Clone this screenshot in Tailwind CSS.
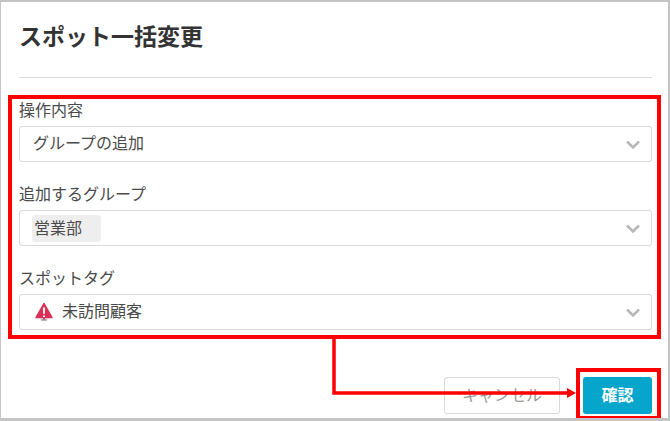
<!DOCTYPE html>
<html lang="ja">

<head>
    <meta charset="UTF-8">
    <meta name="viewport" content="width=device-width, initial-scale=1.0">
    <title>スポット一括変更</title>
    <script src="https://cdn.jsdelivr.net/npm/@tailwindcss/browser@4"></script>
</head>

<body class="bg-white">

    <div class="relative w-[670px] h-[421px] overflow-hidden bg-white border-t-2 border-l border-r-2 border-b-[3px] border-[#c4c4c4] font-['Roboto','Noto_Sans_CJK_JP',sans-serif] text-[#4a4a4a]">
        <div class="px-[18px] pr-[16px]">
            <h2 class="h-[75px] pt-[19px] text-[23px] leading-[34px] font-bold text-[#333]">スポット一括変更</h2>
            <div class="border-t border-[#d9d9d9]"></div>

            <div class="mt-[21px] flex flex-col gap-[21px]">
                <div>
                    <label class="block h-[27px] text-base leading-[24px]">操作内容</label>
                    <div class="flex items-center justify-between h-[36px] pl-[13px] pr-[11px] border border-[#d9d9d9] rounded-[3px] text-base">
                        <span>グループの追加</span>
                        <svg width="14" height="9" viewBox="0 0 14 9" fill="none" stroke="#b8b8b8" stroke-width="2.5"><path d="M1 1.5l6 6 6-6" /></svg>
                    </div>
                </div>

                <div>
                    <label class="block h-[27px] text-base leading-[24px]">追加するグループ</label>
                    <div class="flex items-center justify-between h-[36px] pl-[12px] pr-[11px] border border-[#d9d9d9] rounded-[3px] text-base">
                        <span class="w-[69px] h-[27px] pl-[2px] leading-[27px] bg-[#eeeeee] rounded-[3px]">営業部</span>
                        <svg width="14" height="9" viewBox="0 0 14 9" fill="none" stroke="#b8b8b8" stroke-width="2.5"><path d="M1 1.5l6 6 6-6" /></svg>
                    </div>
                </div>

                <div>
                    <label class="block h-[27px] text-base leading-[24px]">スポットタグ</label>
                    <div class="flex items-center justify-between h-[36px] pl-[15px] pr-[11px] border border-[#d9d9d9] rounded-[3px] text-base">
                        <span class="flex items-center gap-[9px]">
                            <svg width="18" height="20" viewBox="0 0 18 20">
                                <path d="M9 1.5L17 15.5H1z" fill="#dc2f55" stroke="#dc2f55" stroke-width="1.5" stroke-linejoin="round" />
                                <path d="M8 5.5h2l-.2 6.5H8.2z" fill="#fff" />
                                <ellipse cx="9" cy="17.8" rx="3.5" ry="1.2" fill="#b0b0b0" />
                                <rect x="8" y="13.5" width="2" height="3.5" fill="#fff" />
                                <rect x="8" y="15" width="2" height="2.5" fill="#c9425f" />
                            </svg>
                            <span>未訪問顧客</span>
                        </span>
                        <svg width="14" height="9" viewBox="0 0 14 9" fill="none" stroke="#b8b8b8" stroke-width="2.5"><path d="M1 1.5l6 6 6-6" /></svg>
                    </div>
                </div>
            </div>

            <div class="mt-[47px] flex justify-end gap-[23px]">
                <button class="w-[116px] h-[37px] border border-[#d9d9d9] rounded-[3px] text-base text-[#999] bg-white">キャンセル</button>
                <button class="w-[69px] h-[37px] rounded-[3px] text-base font-bold text-white bg-[#05a5cc]">確認</button>
            </div>
        </div>

        <!-- red annotations -->
        <div class="absolute left-[7px] top-[93px] w-[653px] h-[244px] border-4 border-[#ff0000]"></div>
        <div class="absolute left-[575px] top-[366px] w-[85px] h-[52px] border-4 border-[#ff0000]"></div>
        <svg class="absolute left-[330px] top-[335px]" width="250" height="65" viewBox="0 0 250 65" fill="none">
            <path d="M3 0V56H236" stroke="#ff0000" stroke-width="3.5" />
            <path d="M236 51l9 5-9 5z" fill="#ff0000" />
        </svg>
    </div>

</body>

</html>
